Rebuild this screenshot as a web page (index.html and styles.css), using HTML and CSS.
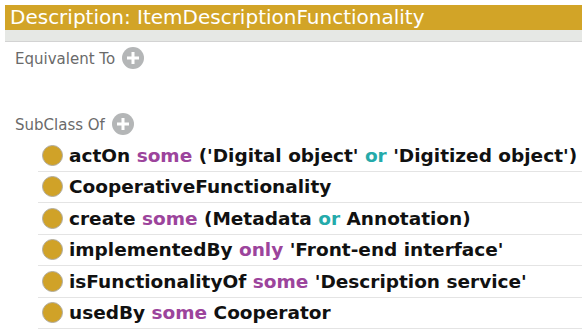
FILE: index.html
```html
<!DOCTYPE html>
<html>
<head>
<meta charset="utf-8">
<link rel="stylesheet" href="styles.css">
</head>
<body>
<div class="panel">
  <div class="title">Description: ItemDescriptionFunctionality</div>
  <div class="subbar"></div>
  <div class="section eq">
    <span class="label">Equivalent To</span>
    <span class="add"><svg width="22" height="22" viewBox="0 0 22 22"><circle cx="11" cy="11" r="11" fill="#b4b6b7"/><rect x="5" y="9.5" width="12" height="3" fill="#fff"/><rect x="9.5" y="5" width="3" height="12" fill="#fff"/></svg></span>
  </div>
  <div class="section sub">
    <span class="label">SubClass Of</span>
    <span class="add"><svg width="22" height="22" viewBox="0 0 22 22"><circle cx="11" cy="11" r="11" fill="#b4b6b7"/><rect x="5" y="9.5" width="12" height="3" fill="#fff"/><rect x="9.5" y="5" width="3" height="12" fill="#fff"/></svg></span>
  </div>
  <ul class="axioms">
    <li><span class="dot"></span><span>actOn <b class="kw">some</b> ('Digital object' <b class="op">or</b> 'Digitized object')</span></li>
    <li><span class="dot"></span><span>CooperativeFunctionality</span></li>
    <li><span class="dot"></span><span>create <b class="kw">some</b> (Metadata <b class="op">or</b> Annotation)</span></li>
    <li><span class="dot"></span><span>implementedBy <b class="kw">only</b> 'Front-end interface'</span></li>
    <li><span class="dot"></span><span>isFunctionalityOf <b class="kw">some</b> 'Description service'</span></li>
    <li><span class="dot"></span><span>usedBy <b class="kw">some</b> Cooperator</span></li>
  </ul>
</div>
</body>
</html>
```
FILE: styles.css
```css
html, body {
  margin: 0;
  padding: 0;
  background: #ffffff;
}
body {
  width: 582px;
  height: 331px;
  overflow: hidden;
}
.panel {
  padding: 5px 0 0 5px;
}
.title {
  height: 25px;
  line-height: 25px;
  background: #d2a427;
  color: #ffffff;
  font-family: "DejaVu Sans", sans-serif;
  font-size: 20px;
  padding-left: 5px;
  white-space: nowrap;
}
.subbar {
  height: 11px;
  background: #e6e8e5;
  border-bottom: 1px solid #d3d3d3;
}
.section {
  display: flex;
  align-items: center;
  gap: 7px;
  padding-left: 10px;
  height: 22px;
}
.add svg {
  display: block;
  flex: none;
}
.eq {
  margin-top: 5px;
}
.sub {
  margin-top: 44px;
}
.label {
  font-family: "DejaVu Sans", sans-serif;
  font-size: 15px;
  color: #6a6a6a;
  padding-top: 2px;
}
.add {
  display: flex;
  flex: none;
}
.axioms {
  list-style: none;
  margin: 5px 0 0 33px;
  padding: 0;
}
.axioms li {
  display: flex;
  align-items: center;
  gap: 6px;
  height: 30.5px;
  border-bottom: 1px solid #e4e4e4;
  padding-left: 4px;
  font-family: "DejaVu Sans", sans-serif;
  font-weight: bold;
  font-size: 18.5px;
  color: #111111;
  white-space: nowrap;
}
.dot {
  width: 19px;
  height: 19px;
  border-radius: 50%;
  background: #d0a228;
  border: 1px solid #b0aca0;
  flex: none;
}
.kw {
  color: #9c449c;
}
.op {
  color: #25aaaa;
}
```
